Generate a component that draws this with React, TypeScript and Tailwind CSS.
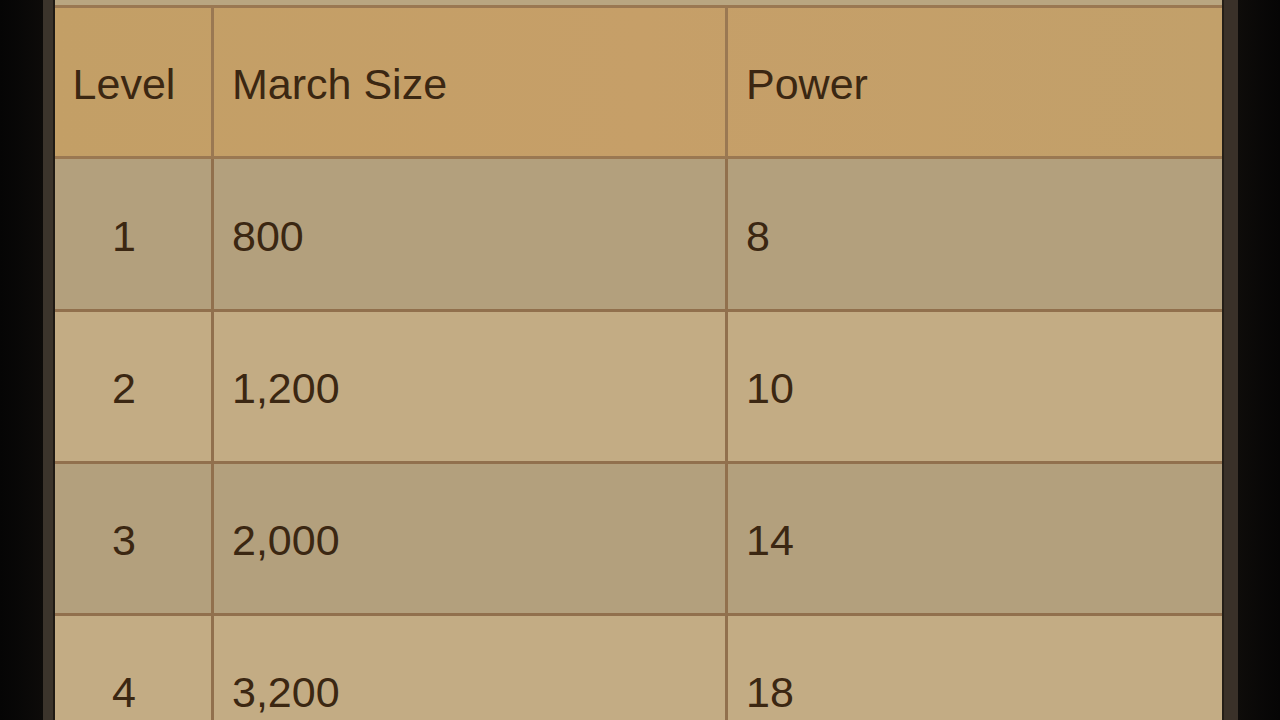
import React from 'react';

// Troop level table inside a dark game frame
const rows = [
  { level: '1', size: '800', power: '8', h: 'h-[153px]' },
  { level: '2', size: '1,200', power: '10', h: 'h-[152px]' },
  { level: '3', size: '2,000', power: '14', h: 'h-[152px]' },
  { level: '4', size: '3,200', power: '18', h: 'h-[152px]' },
];

const font = { fontFamily: '"Liberation Sans", Arial, sans-serif' };

const App: React.FC = () => {
  return (
    <div className="flex h-[720px] w-[1280px] overflow-hidden bg-[#080706]" style={font}>
      {/* left frame */}
      <div className="w-[43px] shrink-0 bg-gradient-to-r from-[#050505] to-[#0d0b09]" />
      <div className="w-[10px] shrink-0 bg-[#3b342b]" />
      <div className="w-[2px] shrink-0 bg-[#1f1a14]" />

      {/* table */}
      <div className="flex w-[1167px] shrink-0 flex-col text-[43px] text-[#3b2712]">
        <div className="h-[5px] shrink-0 bg-[#b9a681]" />
        <div className="flex h-[154px] shrink-0 border-y-[3px] border-[#9a7852] bg-gradient-to-r from-[#c39f66] via-[#c69f68] to-[#c2a06a]">
          <div className="flex w-[159px] items-center justify-center border-r-[3px] border-[#9a7852] pt-[4px] pr-[18px]">
            Level
          </div>
          <div className="flex w-[514px] items-center border-r-[3px] border-[#9a7852] pt-[4px] pl-[18px]">
            March Size
          </div>
          <div className="flex flex-1 items-center pt-[4px] pl-[18px]">Power</div>
        </div>
        {rows.map((r, i) => (
          <div
            key={r.level}
            className={`flex ${r.h} shrink-0 border-b-[3px] border-[#91704d] ${
              i % 2 === 0 ? 'bg-[#b3a07d]' : 'bg-[#c3ac84]'
            }`}
          >
            <div className="flex w-[159px] items-center justify-center border-r-[3px] border-[#91704d] pt-[4px] pr-[18px]">
              {r.level}
            </div>
            <div className="flex w-[514px] items-center border-r-[3px] border-[#91704d] pt-[4px] pl-[18px]">
              {r.size}
            </div>
            <div className="flex flex-1 items-center pt-[4px] pl-[18px]">{r.power}</div>
          </div>
        ))}
      </div>

      {/* right frame */}
      <div className="w-[2px] shrink-0 bg-[#241e17]" />
      <div className="w-[14px] shrink-0 bg-[#3a3129]" />
      <div className="flex-1 bg-gradient-to-r from-[#0e0c0a] to-[#060505]" />
    </div>
  );
};

export default App;
